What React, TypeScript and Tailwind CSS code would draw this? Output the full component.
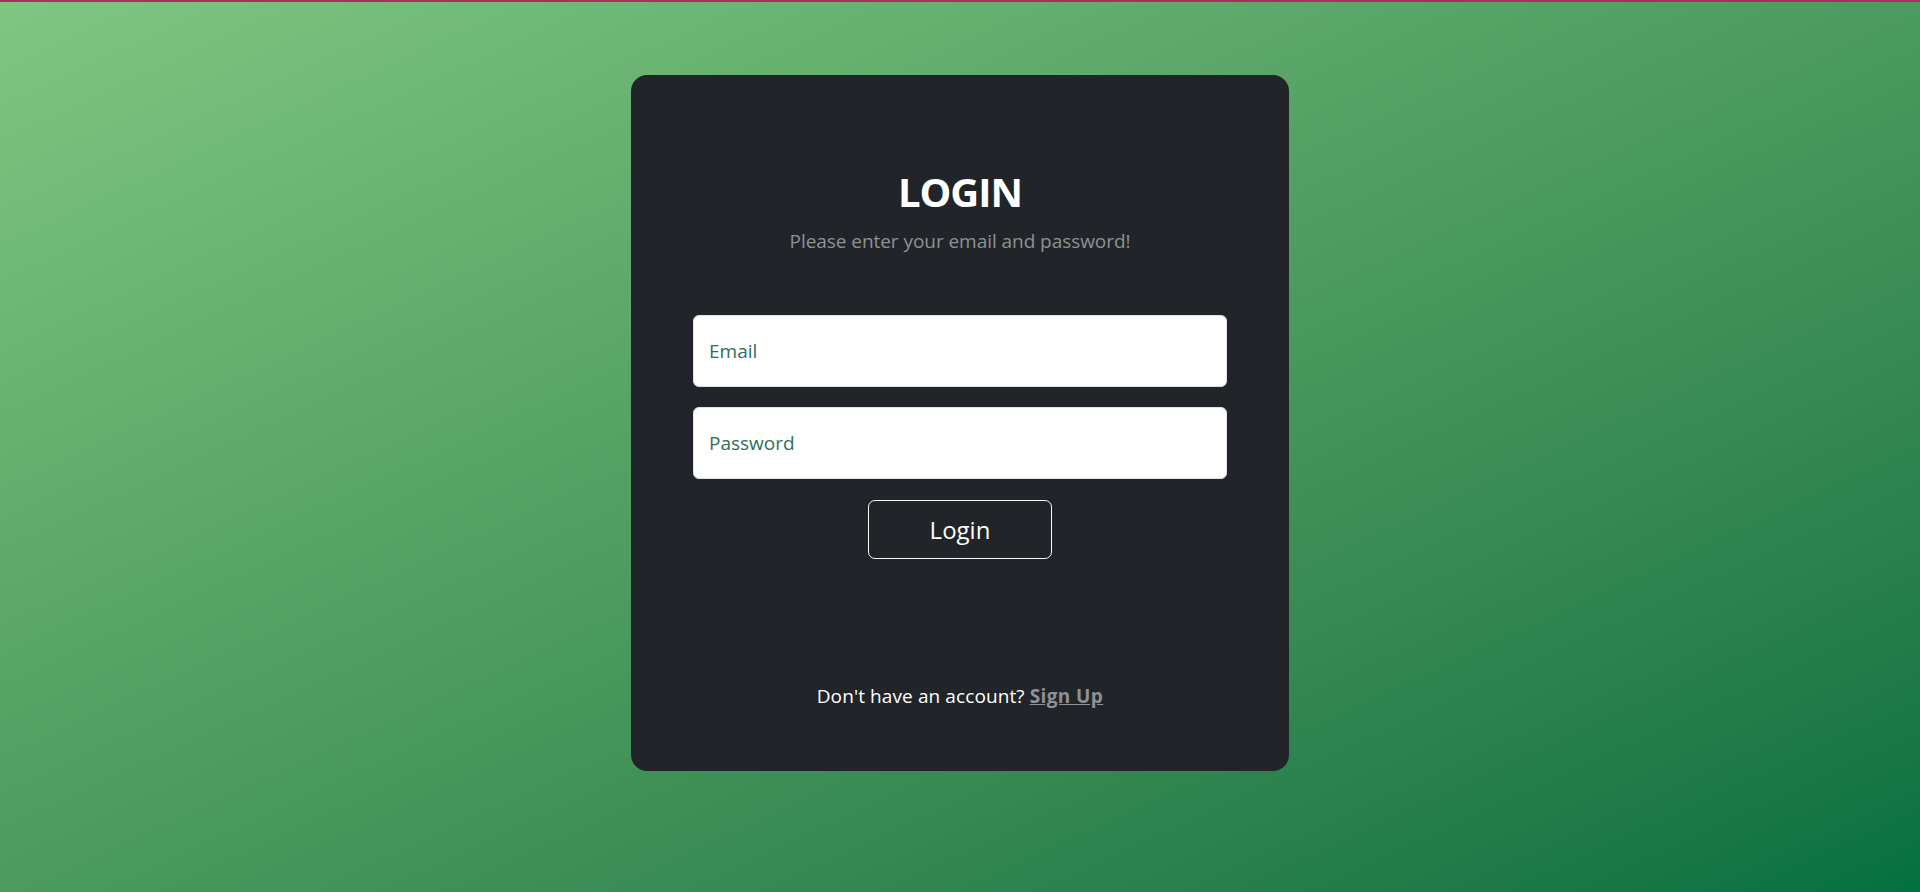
export default function App() {
    return (
        <div
            className="min-h-[892px] w-full border-t-2 border-[#a8305f] bg-gradient-to-br from-[#80c681] to-[#03703f] pt-[73px]"
            style={{ fontFamily: '"Open Sans", "Noto Sans", sans-serif' }}
        >
            <div className="mx-auto flex h-[696px] w-[658px] flex-col rounded-2xl bg-[#212529] px-[62px] pt-[93px] text-center">
                <h2 className="text-[40px] leading-[48px] font-bold tracking-[-1px] text-white uppercase">
                    Login
                </h2>
                <p className="mt-[10px] text-[19px] leading-[30px] tracking-[-0.05px] text-[#8f9194]">
                    Please enter your email and password!
                </p>

                <div className="mt-[59px] flex flex-col gap-[20px]">
                    <input
                        type="email"
                        placeholder="Email"
                        className="h-[72px] w-full rounded-[6px] border border-[#dee2e6] bg-white px-[15px] text-[19px] text-[#2f6f5a] outline-none placeholder:text-[#2f6f5a]"
                    />
                    <input
                        type="password"
                        placeholder="Password"
                        className="h-[72px] w-full rounded-[6px] border border-[#dee2e6] bg-white px-[15px] text-[19px] text-[#2f6f5a] outline-none placeholder:text-[#2f6f5a]"
                    />
                </div>

                <div className="mt-[21px] flex justify-center">
                    <button className="h-[59px] w-[184px] rounded-[7px] border border-[#f8f9fa] text-[24px] text-white">
                        Login
                    </button>
                </div>

                <p className="mt-[122px] text-[19px] leading-[30px] tracking-[0.1px] text-white">
                    Don't have an account?{" "}
                    <a href="#" className="font-bold tracking-[0.4px] text-[#8f9194] underline">
                        Sign Up
                    </a>
                </p>
            </div>
        </div>
    );
}
